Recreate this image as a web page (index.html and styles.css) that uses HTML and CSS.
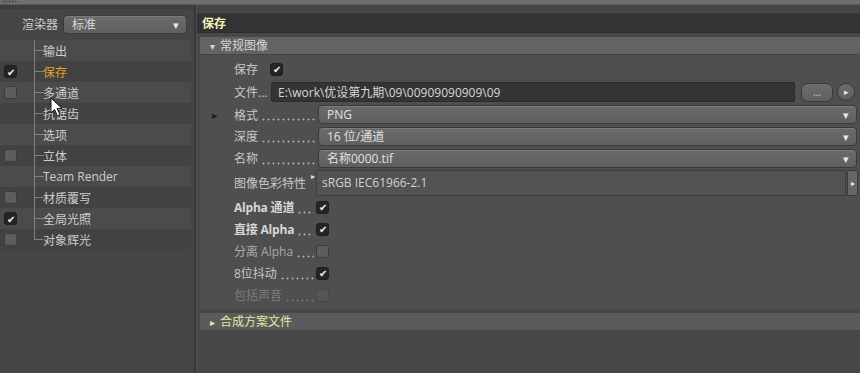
FILE: index.html
```html
<!DOCTYPE html>
<html lang="zh-CN">
<head>
    <meta charset="UTF-8">
    <title>渲染设置 - 保存</title>
    <link rel="stylesheet" href="styles.css">
</head>
<body>
    <div class="topbar"><div class="grip"></div></div>

    <div class="main">
        <aside class="side">
            <div class="renderer">
                <span class="renderer-label">渲染器</span>
                <div class="combo small">标准<span class="arrow">&#9662;</span></div>
            </div>

            <ul class="tree">
                <li class="item"><span class="cb none"></span><span class="branch"></span>输出</li>
                <li class="item active"><span class="cb on">&#10004;</span><span class="branch"></span>保存</li>
                <li class="item"><span class="cb"></span><span class="branch"></span>多通道</li>
                <li class="item"><span class="cb none"></span><span class="branch"></span>抗锯齿</li>
                <li class="item"><span class="cb none"></span><span class="branch"></span>选项</li>
                <li class="item"><span class="cb"></span><span class="branch"></span>立体</li>
                <li class="item"><span class="cb none"></span><span class="branch"></span>Team Render</li>
                <li class="item"><span class="cb"></span><span class="branch"></span>材质覆写</li>
                <li class="item"><span class="cb on">&#10004;</span><span class="branch"></span>全局光照</li>
                <li class="item last"><span class="cb"></span><span class="branch"></span>对象辉光</li>
            </ul>

            <svg class="cursor" width="14" height="20" viewBox="0 0 14 20">
                <path d="M1 1 L1 16 L4.5 12.5 L7.5 19 L10 18 L7 11.5 L12 11.5 Z" fill="#ffffff" stroke="#111111" stroke-width="1"/>
            </svg>
        </aside>

        <div class="divider"></div>

        <section class="panel">
            <div class="panel-top"></div>
            <div class="title-bar">保存</div>

            <div class="group-head open"><span class="tri">&#9662;</span>常规图像</div>

            <div class="group-body">
                <div class="row r-save">
                    <span class="label w-save">保存</span>
                    <span class="cb on">&#10004;</span>
                </div>

                <div class="row r-file">
                    <span class="label w-file">文件...</span>
                    <div class="path-field">E:\work\优设第九期\09\00909090909\09</div>
                    <button class="dots-btn">...</button>
                    <button class="round-btn">&#9656;</button>
                </div>

                <div class="row r-fmt">
                    <span class="side-tri">&#9656;</span>
                    <span class="label w-combo">格式<span class="lead"></span></span>
                    <div class="combo">PNG<span class="arrow">&#9662;</span></div>
                </div>

                <div class="row r-depth">
                    <span class="label w-combo">深度<span class="lead"></span></span>
                    <div class="combo">16 位/通道<span class="arrow">&#9662;</span></div>
                </div>

                <div class="row r-name">
                    <span class="label w-combo">名称<span class="lead"></span></span>
                    <div class="combo">名称0000.tif<span class="arrow">&#9662;</span></div>
                </div>

                <div class="row r-color">
                    <span class="label w-color">图像色彩特性</span>
                    <span class="mini-tri">&#9656;</span>
                    <div class="profile-field">sRGB IEC61966-2.1</div>
                    <button class="side-btn">&#9656;</button>
                </div>

                <div class="row h20">
                    <span class="label w-chk bold">Alpha 通道<span class="lead"></span></span>
                    <span class="cb on">&#10004;</span>
                </div>
                <div class="row h24">
                    <span class="label w-chk bold">直接 Alpha<span class="lead"></span></span>
                    <span class="cb on">&#10004;</span>
                </div>
                <div class="row h20">
                    <span class="label w-chk dim">分离 Alpha<span class="lead"></span></span>
                    <span class="cb"></span>
                </div>
                <div class="row h24">
                    <span class="label w-chk">8位抖动<span class="lead"></span></span>
                    <span class="cb on">&#10004;</span>
                </div>
                <div class="row h20">
                    <span class="label w-chk off">包括声音<span class="lead"></span></span>
                    <span class="cb disabled"></span>
                </div>
            </div>

            <div class="group-head closed"><span class="tri">&#9656;</span>合成方案文件</div>
        </section>
    </div>
</body>
</html>
```

FILE: styles.css
```css
* {
    margin: 0;
    padding: 0;
    box-sizing: border-box;
}

body {
    width: 860px;
    height: 373px;
    overflow: hidden;
    background: #474747;
    font-family: 'Open Sans', 'Noto Sans CJK SC', sans-serif;
    font-size: 12px;
    color: #c8c8c8;
}

.topbar {
    height: 5px;
    background: #6f6f6f;
    border-bottom: 1px solid #5a5a5a;
}

.grip {
    width: 16px;
    height: 3px;
    margin-left: 2px;
    background-image: radial-gradient(circle, #474747 0.8px, transparent 1.2px);
    background-size: 3px 3px;
}

.main {
    display: flex;
    height: 368px;
}

/* left column */
.side {
    position: relative;
    width: 194px;
    background: #454545;
    border-top: 4px solid #3e3e3e;
}

.renderer {
    display: flex;
    align-items: center;
    height: 30px;
    padding-left: 22px;
}

.renderer-label {
    width: 41px;
    color: #cfcfcf;
}

.combo {
    position: relative;
    flex: 1;
    height: 19px;
    line-height: 18px;
    padding-left: 8px;
    color: #e2e2e2;
    background: linear-gradient(#6b6b6b, #5f5f5f);
    border: 1px solid #3a3a3a;
    border-radius: 4px;
    box-shadow: inset 0 1px 0 rgba(255, 255, 255, 0.12);
}

.combo.small {
    flex: none;
    width: 124px;
    color: #d8d8d8;
}

.arrow {
    position: absolute;
    right: 7px;
    top: 0;
    font-size: 11px;
    color: #e8e8e8;
}

.tree {
    list-style: none;
    margin-top: 1px;
    padding-right: 3px;
}

.item {
    display: flex;
    align-items: center;
    height: 21px;
    padding-left: 4px;
    color: #cdcdcd;
    background: #424242;
}

.item:nth-child(odd) {
    background: #4b4b4b;
}

.item.active {
    color: #e3a12f;
}

.branch {
    position: relative;
    align-self: stretch;
    width: 9px;
    margin-left: 17px;
    border-left: 1px solid #808080;
}

.branch::after {
    content: "";
    position: absolute;
    left: 0;
    top: 10px;
    width: 9px;
    border-top: 1px solid #808080;
}

.item.last .branch {
    border-left: none;
}

.item.last .branch::before {
    content: "";
    position: absolute;
    left: 0;
    top: 0;
    height: 11px;
    border-left: 1px solid #808080;
}

.cursor {
    position: absolute;
    left: 50px;
    top: 88px;
}

/* checkboxes */
.cb {
    display: inline-flex;
    align-items: center;
    justify-content: center;
    width: 13px;
    height: 13px;
    flex: none;
    border-radius: 3px;
    background: #5d5d5d;
    border: 1px solid #3c3c3c;
    font-size: 10px;
    color: #f2f2f2;
}

.cb.on {
    background: #252525;
    border-color: #1e1e1e;
}

.cb.none {
    visibility: hidden;
}

.cb.disabled {
    background: #555555;
    border-color: #484848;
}

.divider {
    width: 3px;
    background: #393939;
    border-right: 1px solid #4e4e4e;
}

/* right panel */
.panel {
    flex: 1;
    display: flex;
    flex-direction: column;
}

.panel-top {
    height: 9px;
    background: #464646;
    border-bottom: 1px solid #3b3b3b;
}

.title-bar {
    height: 19px;
    line-height: 19px;
    padding-left: 5px;
    background: #333333;
    color: #f2f2b8;
    font-weight: bold;
    border-bottom: 1px solid #2c2c2c;
}

.group-head {
    margin: 4px 0 0 3px;
    height: 18px;
    line-height: 18px;
    padding-left: 10px;
    background: #636363;
    color: #d6d6d6;
    border-bottom: 1px solid #444444;
}

.group-head .tri {
    display: inline-block;
    width: 10px;
    font-size: 10px;
}

.group-head.closed {
    margin-top: 4px;
    background: #5b5b5b;
    color: #e8e8a4;
}

.group-body {
    margin-left: 3px;
    padding: 3px 0 4px;
    background: #4f4f4f;
}

.row {
    display: flex;
    align-items: center;
    position: relative;
    padding-left: 34px;
}

.label {
    display: flex;
    align-items: center;
    flex: none;
    white-space: nowrap;
}

.lead {
    flex: 1;
    align-self: stretch;
    margin: 0 2px 0 3px;
    background-image: radial-gradient(circle, #b0b0b0 0.8px, transparent 1.2px);
    background-size: 5px 3px;
    background-position: 0 calc(50% + 5px);
    background-repeat: repeat-x;
}

.bold {
    font-weight: bold;
    color: #d6d6d6;
    letter-spacing: -0.2px;
}

.dim {
    color: #aaaaaa;
}

.off {
    color: #7c7c7c;
}

.off .lead {
    background-image: radial-gradient(circle, #7a7a7a 0.8px, transparent 1.2px);
}

.r-save { height: 22px; }
.w-save { width: 36px; }

.r-file { height: 24px; }
.w-file { width: 37px; }

.path-field {
    width: 524px;
    height: 20px;
    line-height: 20px;
    padding-left: 6px;
    background: #343434;
    border: 1px solid #2b2b2b;
    border-radius: 2px;
    color: #d6d6d6;
}

.dots-btn {
    width: 32px;
    height: 19px;
    margin-left: 6px;
    border: 1px solid #3a3a3a;
    border-radius: 7px;
    background: linear-gradient(#6d6d6d, #606060);
    color: #d0d0d0;
    font: 10px 'Open Sans', sans-serif;
    line-height: 14px;
}

.round-btn {
    width: 18px;
    height: 18px;
    margin-left: 4px;
    border: 1px solid #3a3a3a;
    border-radius: 50%;
    background: linear-gradient(#6d6d6d, #606060);
    color: #e6e6e6;
    font-size: 9px;
    line-height: 14px;
}

.side-tri {
    position: absolute;
    left: 12px;
    font-size: 11px;
    color: #1e1e1e;
}

.w-combo {
    width: 84px;
    align-self: stretch;
}

.r-fmt { height: 21px; }
.r-depth { height: 22px; }
.r-name { height: 22px; }

.r-fmt .combo,
.r-depth .combo,
.r-name .combo {
    flex: none;
    width: 539px;
}

.r-color { height: 28px; }

.w-color {
    width: 77px;
}

.mini-tri {
    width: 5px;
    align-self: flex-start;
    margin-top: 3px;
    font-size: 8px;
    line-height: 8px;
    color: #e0e0e0;
}

.profile-field {
    width: 530px;
    height: 26px;
    line-height: 24px;
    padding-left: 5px;
    background: #535353;
    border: 1px solid #3e3e3e;
    color: #d2d2d2;
}

.side-btn {
    width: 11px;
    height: 26px;
    margin-left: 1px;
    border: 1px solid #3a3a3a;
    border-radius: 2px;
    background: #676767;
    color: #e6e6e6;
    font-size: 8px;
}

.w-chk {
    width: 82px;
    align-self: stretch;
}

.h20 { height: 20px; }
.h24 { height: 24px; }
```
